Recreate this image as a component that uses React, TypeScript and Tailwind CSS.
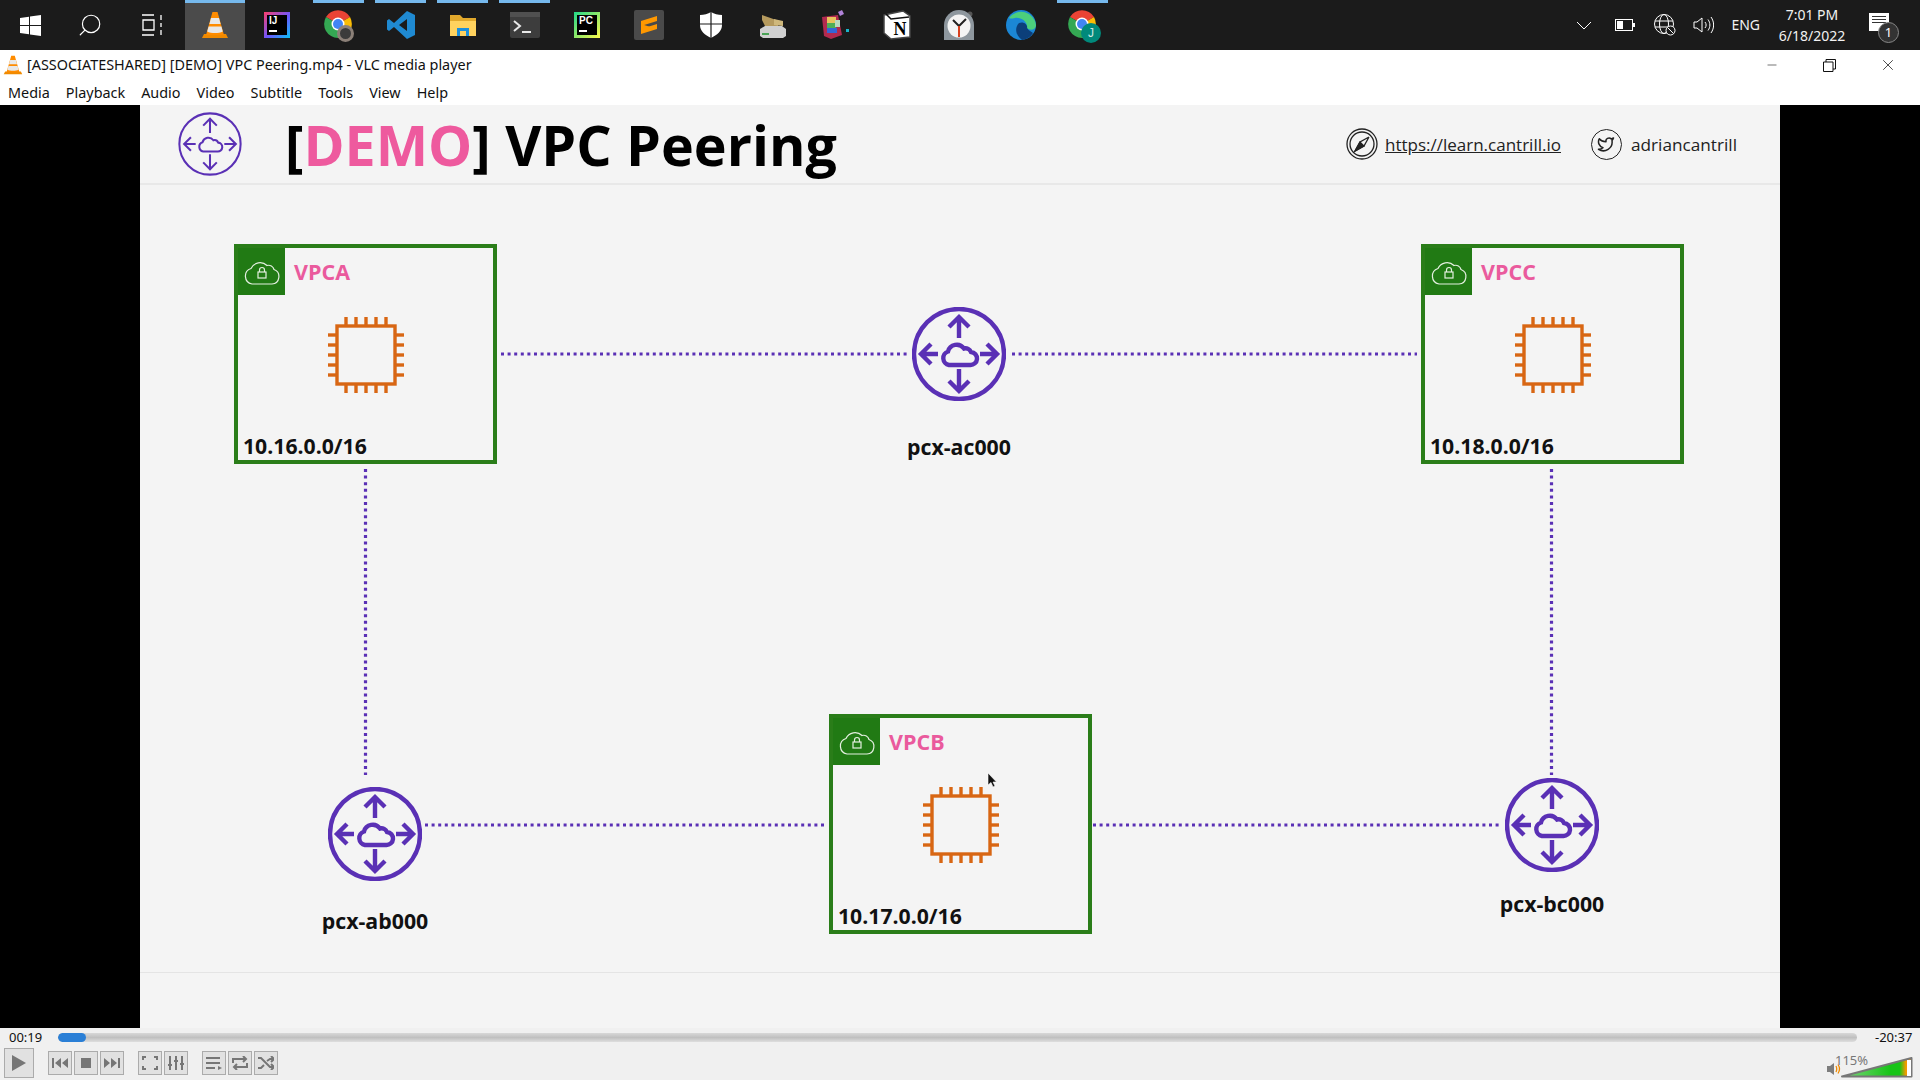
import { Minus, Search, Twitter, X } from "lucide-react";
import type { ReactNode } from "react";

const slideFont = "font-['Open_Sans',sans-serif]";
const uiFont = "font-['Noto_Sans','Open_Sans',sans-serif]";

function VlcCone({ size = 28 }: { size?: number }) {
  return (
    <svg width={size} height={size} viewBox="0 0 28 28">
      <path d="M3 23 L25 23 L27 27 L1 27 Z" fill="#f08a00" />
      <path d="M11.5 1 h5 L23 24 H5 Z" fill="#ff8c00" />
      <path d="M10 7 h8 l1.6 6 h-11.2 Z" fill="#e8e8e8" />
      <path d="M7.6 15.5 h12.8 l1.4 5 c-4 2 -11.6 2 -15.6 0 Z" fill="#e8e8e8" />
    </svg>
  );
}

function ChromeIcon({ badge }: { badge: ReactNode }) {
  return (
    <div className="relative w-[30px] h-[30px]">
      <svg width="28" height="28" viewBox="0 0 28 28">
        <path d="M14 14 L2 7 A14 14 0 0 1 26 7 Z" fill="#ea4335" />
        <path d="M14 14 L26 7 A14 14 0 0 1 14 28 Z" fill="#fbbc04" />
        <path d="M14 14 L14 28 A14 14 0 0 1 2 7 Z" fill="#34a853" />
        <circle cx="14" cy="14" r="6.5" fill="#fff" />
        <circle cx="14" cy="14" r="5" fill="#4285f4" />
      </svg>
      {badge}
    </div>
  );
}

const taskIcons: { key: string; bar?: boolean; active?: boolean; node: ReactNode }[] = [
  { key: "vlc", active: true, node: <VlcCone /> },
  {
    key: "idea",
    node: (
      <div className="w-[26px] h-[26px] bg-[linear-gradient(135deg,#fc3f6c,#6b57ff_55%,#07c3f2)] p-[3px]">
        <div className="w-full h-full bg-black text-white text-[10px] leading-[12px] font-bold font-['Liberation_Sans',sans-serif] pl-[2px]">
          IJ
          <div className="w-[8px] h-[1.5px] bg-white mt-[3px]" />
        </div>
      </div>
    ),
  },
  {
    key: "chrome-1",
    bar: true,
    node: (
      <ChromeIcon
        badge={<div className="absolute right-0 bottom-[-2px] w-[17px] h-[17px] rounded-full bg-[#3b3b3b] border-[3px] border-[#8c8078]" />}
      />
    ),
  },
  {
    key: "vscode",
    bar: true,
    node: (
      <svg width="30" height="30" viewBox="0 0 30 30">
        <path d="M21 1 L29 5 V25 L21 29 L8 17 L3 21 L1 19.5 V10.5 L3 9 L8 13 Z M21 9 L13 15 L21 21 Z" fill="#1f8ad2" fillRule="evenodd" />
      </svg>
    ),
  },
  {
    key: "files",
    bar: true,
    node: (
      <svg width="28" height="28" viewBox="0 0 28 28">
        <path d="M1 4 H11 L14 7 H27 V25 H1 Z" fill="#e2a92c" />
        <path d="M1 10 H27 V25 H1 Z" fill="#ffd25e" />
        <path d="M8 25 V17 H20 V25 H17 V20 H11 V25 Z" fill="#1c8fdb" />
      </svg>
    ),
  },
  {
    key: "terminal",
    bar: true,
    node: (
      <svg width="30" height="28" viewBox="0 0 30 28">
        <rect x="0" y="1" width="30" height="26" rx="2" fill="#3d3d3d" />
        <rect x="0" y="1" width="30" height="5" fill="#505050" />
        <path d="M4 10 L10 15 L4 20" fill="none" stroke="#e8e8e8" strokeWidth="2" />
        <path d="M12 21 H21" stroke="#e8e8e8" strokeWidth="2" />
      </svg>
    ),
  },
  {
    key: "pycharm",
    node: (
      <div className="w-[26px] h-[26px] bg-[linear-gradient(135deg,#21d789,#fcf84a)] p-[3px]">
        <div className="w-full h-full bg-black text-white text-[10px] leading-[12px] font-bold font-['Liberation_Sans',sans-serif] pl-[2px]">
          PC
          <div className="w-[8px] h-[1.5px] bg-white mt-[3px]" />
        </div>
      </div>
    ),
  },
  {
    key: "sublime",
    node: (
      <div className="w-[30px] h-[30px] bg-[#4a4a4a] rounded-[2px] flex items-center justify-center">
        <svg width="18" height="20" viewBox="0 0 18 20" fill="#ff9800">
          <path d="M17 1 V6 L1 11 V6 Z" />
          <path d="M1 14 V9 L17 14 Z" />
          <path d="M17 9 V14 L1 19 V14 Z" />
        </svg>
      </div>
    ),
  },
  {
    key: "shield",
    node: (
      <svg width="22" height="26" viewBox="0 0 22 26">
        <path d="M11 0 C14 2 18 3 22 3 V13 C22 19 17 23 11 26 C5 23 0 19 0 13 V3 C4 3 8 2 11 0 Z" fill="#fff" />
        <path d="M11 0 V26 M0 12 H22" stroke="#1b1b1b" strokeWidth="1.2" />
      </svg>
    ),
  },
  {
    key: "drive",
    node: (
      <svg width="28" height="28" viewBox="0 0 28 28">
        <path d="M1 18 L6 15 H23 L27 18 V25 L24 27 H4 L1 25 Z" fill="#d0d0d0" />
        <path d="M3 22 H10 V24 H3 Z" fill="#4aa356" />
        <path d="M3 4 L20 10 L19 15 L6 15 L3 9 Z" fill="#b59a5e" />
        <path d="M15 8 L24 10 V15 L15 14 Z" fill="#cfb87c" />
      </svg>
    ),
  },
  {
    key: "rar",
    node: (
      <svg width="28" height="30" viewBox="0 0 28 30">
        <path d="M1 7 L17 5 L21 25 L10 29 L3 26 Z" fill="#b22a4f" />
        <rect x="6" y="7" width="9" height="6" fill="#e9c35c" />
        <rect x="6" y="13" width="9" height="5" fill="#4fae57" />
        <rect x="6" y="18" width="10" height="5" fill="#3566d6" />
        <rect x="14" y="10" width="5" height="7" fill="#b9d9c0" />
        <path d="M17 2 L21 0 L23 4 L19 6 Z" fill="#b183d9" />
        <rect x="25" y="19" width="3" height="3" fill="#19b3c9" />
      </svg>
    ),
  },
  {
    key: "notion",
    node: (
      <svg width="28" height="30" viewBox="0 0 28 30">
        <path d="M1 5 L20 1 L27 6 V27 L8 29 L1 23 Z" fill="#fff" stroke="#444" strokeWidth="1.5" />
        <path d="M3 4 L8 9 L26 7" fill="none" stroke="#111" strokeWidth="1.5" />
        <text x="17" y="25" textAnchor="middle" fontSize="18" fontWeight="700" fontFamily="Liberation Serif, serif" fill="#000">
          N
        </text>
      </svg>
    ),
  },
  {
    key: "clock",
    node: (
      <svg width="30" height="30" viewBox="0 0 30 30">
        <circle cx="26" cy="4" r="2.5" fill="#555" />
        <path d="M0 30 V15 A15 15 0 0 1 30 15 V30 Z" fill="#8e979e" />
        <circle cx="15" cy="16" r="11.5" fill="#f4f4f4" />
        <path d="M15 16 L9 10 M15 16 L22 9" stroke="#222" strokeWidth="2" />
        <path d="M15 16 V27" stroke="#d9401e" strokeWidth="2" />
      </svg>
    ),
  },
  {
    key: "edge",
    node: (
      <svg width="30" height="30" viewBox="0 0 30 30">
        <circle cx="15" cy="15" r="15" fill="#1b87d6" />
        <path d="M3 8 A15 15 0 0 1 30 15 C30 20 24 21 21 18 C22 12 15 7 9 8 C6 8.5 4 9 3 8 Z" fill="#4ccf7c" />
        <path d="M13 13 C18 11 22 15 21 18 C23 21 26 22 27 23 A15 15 0 0 1 16 30 C10 26 8 18 13 13 Z" fill="#0c3f7a" />
      </svg>
    ),
  },
  {
    key: "chrome-2",
    bar: true,
    node: (
      <ChromeIcon
        badge={
          <div className="absolute right-[-3px] bottom-[-3px] w-[20px] h-[20px] rounded-full bg-[#00897b] text-[#cfe8e4] text-[12px] leading-[20px] text-center font-['Liberation_Sans',sans-serif]">
            J
          </div>
        }
      />
    ),
  },
];

function Taskbar() {
  return (
    <div className={`h-[50px] shrink-0 bg-[#1b1b1b] flex items-center text-white ${uiFont}`}>
      <div className="w-[60px] h-full flex items-center justify-center">
        <svg width="21" height="21" viewBox="0 0 21 21" fill="#fff">
          <path d="M0 3 L9 1.7 V10 H0 Z M10 1.5 L21 0 V10 H10 Z M0 11 H9 V19.3 L0 18 Z M10 11 H21 V21 L10 19.5 Z" />
        </svg>
      </div>
      <div className="w-[60px] h-full flex items-center justify-center">
        <Search size={26} strokeWidth={1.1} className="-scale-x-100" />
      </div>
      <div className="w-[64px] h-full flex items-center justify-center">
        <svg width="20" height="22" viewBox="0 0 20 22" fill="none" stroke="#fff" strokeWidth="1.3">
          <path d="M0 1 H12 M0 21 H12 M1 6 H12 V16 H1 Z M19 1 V6 M19 9 V13 M19 16 V21" />
        </svg>
      </div>
      {taskIcons.map((t) => (
        <div key={t.key} className="relative w-[62px] h-full flex items-center justify-center">
          {t.active && <div className="absolute inset-y-0 left-px w-[60px] bg-[#4b4b4b]" />}
          {(t.bar || t.active) && (
            <div className={`absolute top-0 h-[3px] bg-[#76b9ed] ${t.active ? "left-px w-[60px]" : "left-[5px] w-[51px]"}`} />
          )}
          <div className="relative">{t.node}</div>
        </div>
      ))}
      <div className="flex-1" />
      <svg width="16" height="9" viewBox="0 0 16 9" fill="none" stroke="#fff" strokeWidth="1">
        <path d="M1 1 L8 8 L15 1" />
      </svg>
      <svg className="ml-[23px]" width="20" height="12" viewBox="0 0 20 12">
        <rect x="0.5" y="0.5" width="17" height="11" fill="none" stroke="#fff" />
        <rect x="2" y="2" width="6" height="8" fill="#fff" />
        <rect x="18" y="4" width="2" height="4" fill="#fff" />
      </svg>
      <svg className="ml-[19px]" width="22" height="22" viewBox="0 0 22 22" fill="none" stroke="#fff" strokeWidth="1">
        <circle cx="10" cy="10" r="9.5" />
        <ellipse cx="10" cy="10" rx="4.5" ry="9.5" />
        <path d="M1 7 H19 M1 13 H19" />
        <circle cx="16.5" cy="16.5" r="4.5" fill="#1b1b1b" />
        <path d="M13.5 13.5 L19.5 19.5" />
      </svg>
      <svg className="ml-[17px]" width="21" height="18" viewBox="0 0 21 18" fill="none" stroke="#fff" strokeWidth="1">
        <path d="M1 6 H4 L9 2 V16 L4 12 H1 Z M12 6 C13.5 8 13.5 10 12 12 M15 3.5 C17.5 7 17.5 11 15 14.5 M18 1 C21.5 6 21.5 12 18 17" />
      </svg>
      <span className="ml-[17px] text-[14px] leading-none text-[#f2f2f2]">ENG</span>
      <div className="ml-[18px] w-[68px] flex flex-col items-center text-[14px] leading-[21px] text-[#f2f2f2] whitespace-nowrap">
        <span>7:01 PM</span>
        <span>6/18/2022</span>
      </div>
      <div className="relative ml-[23px] mr-[31px] w-[20px] h-[18px] -mt-[6px] bg-white flex flex-col gap-[2px] px-[3px] pt-[3px]">
        <div className="h-px bg-[#333]" />
        <div className="h-px bg-[#333]" />
        <div className="h-px bg-[#333]" />
        <div className="absolute left-[9px] top-[9px] w-[21px] h-[21px] rounded-full bg-[#333] border border-[#888] text-[13px] leading-[19px] text-center text-white">
          1
        </div>
      </div>
    </div>
  );
}

function TitleBar() {
  return (
    <div className={`h-[30px] shrink-0 bg-white flex items-center text-[#111] ${uiFont}`}>
      <div className="ml-[3px] w-[20px] flex justify-center">
        <VlcCone size={20} />
      </div>
      <span className="ml-[4px] -mt-[1px] text-[14.4px] whitespace-nowrap">[ASSOCIATESHARED] [DEMO] VPC Peering.mp4 - VLC media player</span>
      <div className="flex-1" />
      <Minus size={14} strokeWidth={1} className="mr-[44px]" />
      <svg className="mr-[43px]" width="13" height="13" viewBox="0 0 13 13" fill="none" stroke="#111" strokeWidth="1">
        <path d="M0.5 3 H10 V12.5 H0.5 Z M3 3 V0.5 H12.5 V10 H10" />
      </svg>
      <X size={18} strokeWidth={1} className="mr-[23px]" />
    </div>
  );
}

function MenuBar() {
  const items = ["Media", "Playback", "Audio", "Video", "Subtitle", "Tools", "View", "Help"];
  return (
    <div className={`h-[25px] shrink-0 bg-white flex items-center pl-[8px] gap-[16px] text-[14.4px] text-[#111] ${uiFont}`}>
      {items.map((m) => (
        <span key={m}>{m}</span>
      ))}
    </div>
  );
}

function PeeringIcon({ size = 94, stroke = 4.4 }: { size?: number; stroke?: number }) {
  return (
    <svg width={size} height={size} viewBox="0 0 94 94" fill="none" stroke="#5a30b5" strokeWidth={stroke}>
      <circle cx="47" cy="47" r="45" />
      <path d="M47 10 V31 M37 20 L47 10 L57 20" />
      <path d="M47 62 V84 M37 74 L47 84 L57 74" />
      <path d="M9 47 H26 M19 37 L9 47 L19 57" />
      <path d="M68 47 H85 M75 37 L85 47 L75 57" />
      <path d="M37 58 H58 a6.5 6.5 0 0 0 1 -13 a6 6 0 0 0 -7 -3.5 a9 9 0 0 0 -16 3 a7 7 0 0 0 1 13.5 Z" />
    </svg>
  );
}

function ChipIcon() {
  const pins = [-20, -10, 0, 10, 20];
  return (
    <svg width="78" height="78" viewBox="-39 -39 78 78" fill="none" stroke="#d86613" strokeWidth="3.4">
      <rect x="-29" y="-29" width="58" height="58" />
      {pins.map((p) => (
        <g key={p}>
          <path d={`M${p} -38 V-30`} />
          <path d={`M${p} 30 V38`} />
          <path d={`M-38 ${p} H-30`} />
          <path d={`M30 ${p} H38`} />
        </g>
      ))}
    </svg>
  );
}

function VpcBox({ name, cidr, className }: { name: string; cidr: string; className: string }) {
  return (
    <div className={`absolute w-[263px] h-[220px] border-[4px] border-[#2a7d19] flex flex-col ${className}`}>
      <div className="flex items-start">
        <div className="w-[47px] h-[47px] bg-[#217a14] flex items-center justify-center">
          <svg width="38" height="30" viewBox="0 0 38 30" fill="none" stroke="#e4efe0" strokeWidth="1.2">
            <path d="M9 27 H29 a7.5 7.5 0 0 0 2 -14.5 a5.5 5.5 0 0 0 -7 -4 a10 10 0 0 0 -16 3 a8 8 0 0 0 1 15.5 Z" />
            <rect x="15" y="15" width="8" height="6" />
            <path d="M16.5 15 V13 a2.5 2.5 0 0 1 5 0 V15" />
          </svg>
        </div>
        <span className="ml-[9px] mt-[9px] text-[21.5px] leading-[30px] font-bold text-[#ea5a9d]">{name}</span>
      </div>
      <div className="flex-1 flex justify-center items-start pt-[21px]">
        <ChipIcon />
      </div>
      <div className="pl-[5px] text-[21.2px] leading-[28px] font-bold text-[#111]">{cidr}</div>
    </div>
  );
}

function Peering({ label, className, gap }: { label: string; className: string; gap: string }) {
  return (
    <div className={`absolute w-[160px] flex flex-col items-center ${gap} ${className}`}>
      <PeeringIcon />
      <span className="text-[21.3px] leading-[30px] font-bold text-[#111]">{label}</span>
    </div>
  );
}

function Slide() {
  return (
    <div className={`flex-1 h-full bg-[#f4f4f4] flex flex-col ${slideFont}`}>
      <div className="h-[80px] shrink-0 border-b-2 border-[#e8e8e8] flex items-center pl-[38px]">
        <PeeringIcon size={64} stroke={3} />
        <h1 className="ml-[43px] mt-[2px] text-[55.6px] leading-none font-bold text-black whitespace-nowrap">
          [<span className="text-[#ee5a9e]">DEMO</span>] VPC Peering
        </h1>
        <div className="flex-1" />
        <svg width="32" height="32" viewBox="0 0 32 32" fill="none" stroke="#222" strokeWidth="1.3">
          <circle cx="16" cy="16" r="15" />
          <circle cx="16" cy="16" r="12" />
          <path d="M23 9 L18 18 L9 23 L14 14 L23 9" fill="none" />
          <path d="M18 18 L9 23 L14 14 Z" fill="#222" />
        </svg>
        <span className="ml-[7px] mt-[2px] text-[17px] text-[#222] underline">https://learn.cantrill.io</span>
        <div className="ml-[30px] w-[31px] h-[31px] rounded-full border-[1.5px] border-[#222] flex items-center justify-center">
          <Twitter size={18} strokeWidth={2} color="#222" />
        </div>
        <span className="ml-[9px] mr-[43px] mt-[2px] text-[17.2px] text-[#222]">adriancantrill</span>
      </div>
      <div className="relative flex-1">
        <svg className="absolute inset-0 w-full h-full" fill="none" stroke="#5a30b5" strokeWidth="3.2" strokeDasharray="3 3.6">
          <path d="M361 169 H767" />
          <path d="M872 169 H1277" />
          <path d="M225.5 284 V590" />
          <path d="M1411.5 284 V590" />
          <path d="M285 640 H685" />
          <path d="M953 640 H1360" />
        </svg>
        <VpcBox name="VPCA" cidr="10.16.0.0/16" className="left-[94px] top-[59px]" />
        <VpcBox name="VPCC" cidr="10.18.0.0/16" className="left-[1281px] top-[59px]" />
        <VpcBox name="VPCB" cidr="10.17.0.0/16" className="left-[689px] top-[529px]" />
        <Peering label="pcx-ac000" gap="gap-[31px]" className="left-[739px] top-[122px]" />
        <Peering label="pcx-ab000" gap="gap-[25px]" className="left-[155px] top-[602px]" />
        <Peering label="pcx-bc000" gap="gap-[17px]" className="left-[1332px] top-[593px]" />
        <svg className="absolute left-[847px] top-[587px]" width="10" height="16" viewBox="0 0 10 16">
          <path d="M1 1 V13 L4 10.5 L6 15 L8 14 L6 10 H9.5 Z" fill="#111" stroke="#fff" strokeWidth="0.6" />
        </svg>
      </div>
      <div className="h-[56px] shrink-0 border-t border-[#e4e4e4]" />
    </div>
  );
}

function CtlButton({ children, className = "w-[24px] h-[24px]" }: { children: ReactNode; className?: string }) {
  return (
    <div className={`${className} bg-[#e1e1e1] border border-[#ababab] flex items-center justify-center`}>{children}</div>
  );
}

function Controls() {
  const gray = "#767676";
  return (
    <div className={`h-[52px] shrink-0 bg-[#f0f0f0] flex flex-col ${uiFont}`}>
      <div className="h-[21px] flex items-center text-[13px] text-[#111]">
        <span className="ml-[9px] w-[49px]">00:19</span>
        <div className="w-[1799px] h-[9px] rounded-full bg-[linear-gradient(#d8d8d8,#c0c0c0,#dedede)] overflow-hidden">
          <div className="w-[28px] h-full rounded-full bg-[#2a7fd6]" />
        </div>
        <span className="ml-[18px]">-20:37</span>
      </div>
      <div className="flex-1 flex items-start pl-[4px]">
        <CtlButton className="w-[30px] h-[30px]">
          <svg width="14" height="16" viewBox="0 0 14 16"><path d="M0 0 L14 8 L0 16 Z" fill={gray} /></svg>
        </CtlButton>
        <div className="flex gap-[2px] ml-[14px] mt-[3px]">
          <CtlButton>
            <svg width="16" height="10" viewBox="0 0 16 10" fill={gray}><path d="M0 0 H2 V10 H0 Z M9 0 V10 L3 5 Z M16 0 V10 L10 5 Z" /></svg>
          </CtlButton>
          <CtlButton>
            <svg width="10" height="10"><rect width="10" height="10" fill={gray} /></svg>
          </CtlButton>
          <CtlButton>
            <svg width="16" height="10" viewBox="0 0 16 10" fill={gray}><path d="M16 0 H14 V10 H16 Z M7 0 V10 L13 5 Z M0 0 V10 L6 5 Z" /></svg>
          </CtlButton>
        </div>
        <div className="flex gap-[2px] ml-[14px] mt-[3px]">
          <CtlButton>
            <svg width="16" height="14" viewBox="0 0 16 14" fill="none" stroke={gray} strokeWidth="2">
              <path d="M1 4 V1 H4 M12 1 H15 V4 M15 10 V13 H12 M4 13 H1 V10" />
            </svg>
          </CtlButton>
          <CtlButton>
            <svg width="16" height="14" viewBox="0 0 16 14" fill="none" stroke={gray} strokeWidth="2">
              <path d="M2 0 V14 M8 0 V14 M14 0 V14 M0 9 H4 M6 5 H10 M12 8 H16" />
            </svg>
          </CtlButton>
        </div>
        <div className="flex gap-[2px] ml-[14px] mt-[3px]">
          <CtlButton>
            <svg width="16" height="14" viewBox="0 0 16 14" fill={gray}><path d="M0 1 H14 V3 H0 Z M0 6 H14 V8 H0 Z M0 11 H9 V13 H0 Z M12 10 L16 12 L12 14 Z" /></svg>
          </CtlButton>
          <CtlButton>
            <svg width="16" height="14" viewBox="0 0 16 14" fill="none" stroke={gray} strokeWidth="2">
              <path d="M1 7 V3 H14 M11 0 L14 3 L11 6 M15 7 V11 H2 M5 8 L2 11 L5 14" />
            </svg>
          </CtlButton>
          <CtlButton>
            <svg width="16" height="14" viewBox="0 0 16 14" fill="none" stroke={gray} strokeWidth="2">
              <path d="M0 2 H3 L12 11 H15 M0 12 H3 L6 9 M9 5 L12 3 H15 M13 0 L16 3 L13 6 M13 8 L16 11 L13 14" />
            </svg>
          </CtlButton>
        </div>
        <div className="flex-1" />
        <svg className="mt-[14px]" width="14" height="14" viewBox="0 0 14 14">
          <path d="M0 4 H3 L7 1 V13 L3 10 H0 Z" fill="#7d7d7d" />
          <path d="M9 4 C10 6 10 8 9 10 M11 2.5 C13 5.5 13 8.5 11 11.5" fill="none" stroke="#f08a00" strokeWidth="1.3" />
        </svg>
        <div className="relative w-[72px] h-[28px] mr-[7px] mt-[6px]">
          <svg className="absolute left-0 bottom-[4px]" width="72" height="21" viewBox="0 0 72 21">
            <defs>
              <linearGradient id="vol" x1="0" x2="1" y1="0" y2="0">
                <stop offset="0" stopColor="#7fd67f" />
                <stop offset="0.7" stopColor="#18c418" />
                <stop offset="0.83" stopColor="#18c418" />
                <stop offset="0.92" stopColor="#f59a00" />
                <stop offset="1" stopColor="#f59a00" />
              </linearGradient>
            </defs>
            <path d="M1 19.5 L70.5 1 V19.5 Z" fill="url(#vol)" stroke="#777" strokeWidth="2" strokeLinejoin="round" />
            <path d="M66 3 H70 V19 H66 Z" fill="#fff" />
          </svg>
          <span className="absolute left-[-6px] top-[-3px] text-[13px] text-[#777]">115%</span>
        </div>
      </div>
    </div>
  );
}

export default function App() {
  return (
    <div className="w-[1920px] h-[1080px] flex flex-col overflow-hidden bg-black">
      <Taskbar />
      <TitleBar />
      <MenuBar />
      <div className="flex-1 min-h-0 flex">
        <div className="w-[140px] bg-black" />
        <Slide />
        <div className="w-[140px] bg-black" />
      </div>
      <Controls />
    </div>
  );
}
